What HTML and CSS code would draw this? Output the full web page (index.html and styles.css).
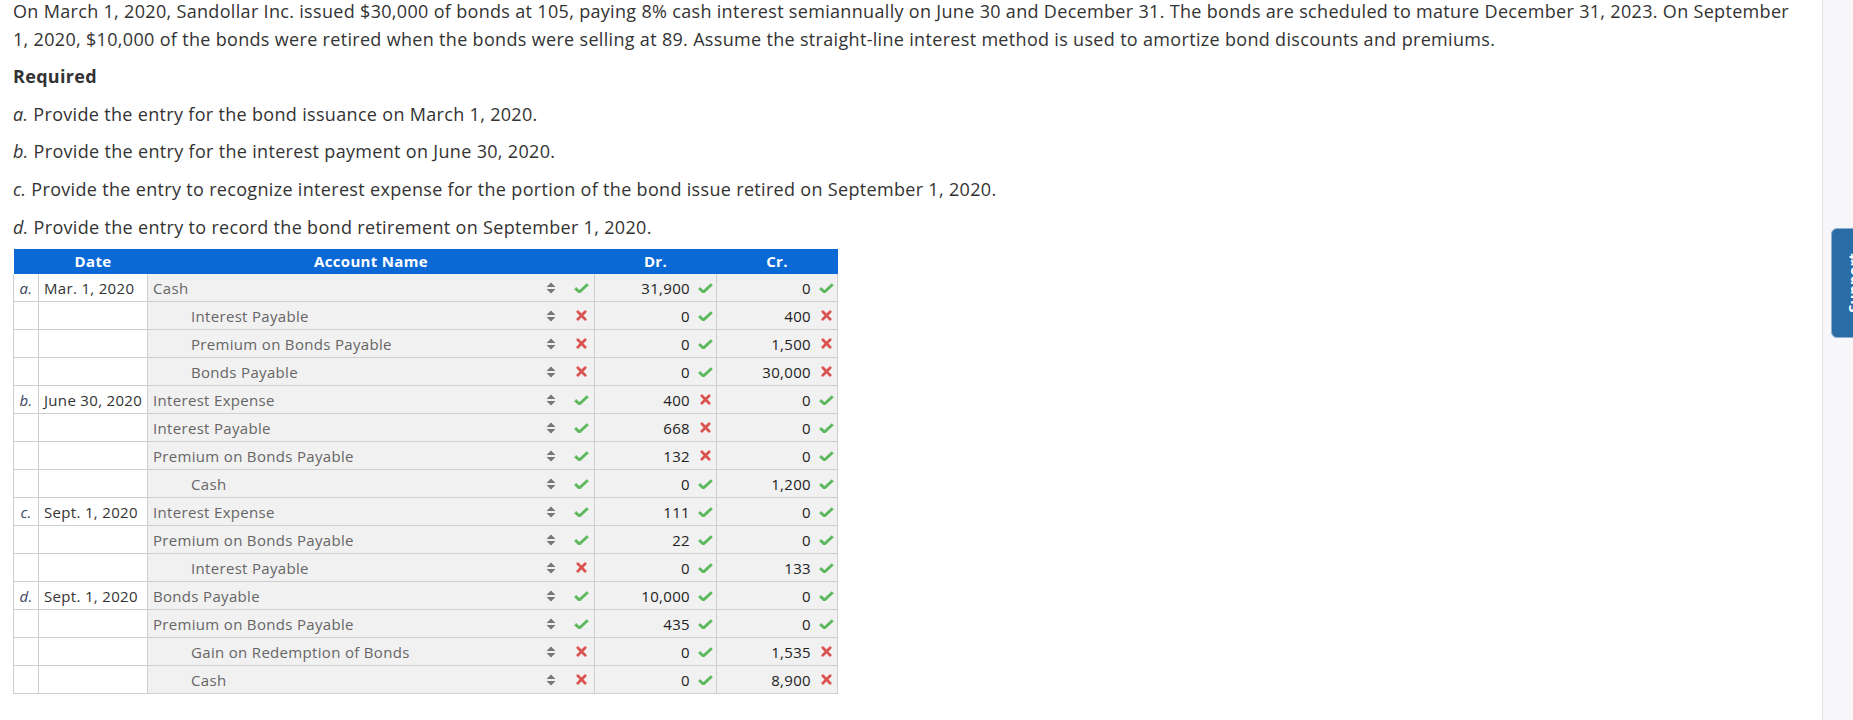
FILE: index.html
```html
<!DOCTYPE html>
<html lang="en">
<head>
<meta charset="utf-8">
<title>Bond entries</title>
<link rel="stylesheet" href="styles.css">
</head>
<body>
<svg width="0" height="0" class="defs" aria-hidden="true">
  <defs>
    <symbol id="ok" viewBox="0 0 15 10"><path d="M1.2 5.2 L5.4 9 L13.8 1.2" fill="none" stroke="#5cb85c" stroke-width="2.9" stroke-linejoin="miter"/></symbol>
    <symbol id="bad" viewBox="0 0 12 12"><path d="M2 2 L10 10 M10 2 L2 10" fill="none" stroke="#d9534f" stroke-width="3" stroke-linecap="round"/></symbol>
    <symbol id="sort" viewBox="0 0 10 12"><path d="M0.5 5 L5 0.5 L9.5 5 Z M0.5 7 L9.5 7 L5 11.5 Z" fill="#777"/></symbol>
  </defs>
</svg>
<div class="page">
  <main class="main">
    <p class="intro">On March 1, 2020, Sandollar Inc. issued $30,000 of bonds at 105, paying 8% cash interest semiannually on June 30 and December 31. The bonds are scheduled to mature December 31, 2023. On September 1, 2020, $10,000 of the bonds were retired when the bonds were selling at 89. Assume the straight-line interest method is used to amortize bond discounts and premiums.</p>
    <p class="req">Required</p>
    <p class="item"><i>a.</i> Provide the entry for the bond issuance on March 1, 2020.</p>
    <p class="item"><i>b.</i> Provide the entry for the interest payment on June 30, 2020.</p>
    <p class="item"><i>c.</i> Provide the entry to recognize interest expense for the portion of the bond issue retired on September 1, 2020.</p>
    <p class="item last"><i>d.</i> Provide the entry to record the bond retirement on September 1, 2020.</p>

    <table class="jt">
      <colgroup><col class="c-l"><col class="c-d"><col class="c-a"><col class="c-n"><col class="c-n2"></colgroup>
      <thead>
        <tr><th></th><th>Date</th><th>Account Name</th><th>Dr.</th><th>Cr.</th></tr>
      </thead>
      <tbody id="rows"></tbody>
    </table>
  </main>
  <aside class="side">
    <div class="support"><span>Support</span></div>
  </aside>
</div>
<script>
const data = [
  ["a.","Mar. 1, 2020","Cash",0,1,"31,900",1,"0",1],
  ["","","Interest Payable",1,0,"0",1,"400",0],
  ["","","Premium on Bonds Payable",1,0,"0",1,"1,500",0],
  ["","","Bonds Payable",1,0,"0",1,"30,000",0],
  ["b.","June 30, 2020","Interest Expense",0,1,"400",0,"0",1],
  ["","","Interest Payable",0,1,"668",0,"0",1],
  ["","","Premium on Bonds Payable",0,1,"132",0,"0",1],
  ["","","Cash",1,1,"0",1,"1,200",1],
  ["c.","Sept. 1, 2020","Interest Expense",0,1,"111",1,"0",1],
  ["","","Premium on Bonds Payable",0,1,"22",1,"0",1],
  ["","","Interest Payable",1,0,"0",1,"133",1],
  ["d.","Sept. 1, 2020","Bonds Payable",0,1,"10,000",1,"0",1],
  ["","","Premium on Bonds Payable",0,1,"435",1,"0",1],
  ["","","Gain on Redemption of Bonds",1,0,"0",1,"1,535",0],
  ["","","Cash",1,0,"0",1,"8,900",0]
];
const icon = ok => ok
  ? '<svg class="ic ic-ok" viewBox="0 0 15 10"><use href="#ok"/></svg>'
  : '<svg class="ic ic-bad" viewBox="0 0 12 12"><use href="#bad"/></svg>';
const tb = document.getElementById('rows');
tb.innerHTML = data.map(r => `
  <tr>
    <td class="let"><i>${r[0]}</i></td>
    <td class="date">${r[1]}</td>
    <td class="acct"><div class="acct-in"><span class="name${r[3] ? ' ind' : ''}">${r[2]}</span><svg class="sort" viewBox="0 0 10 12"><use href="#sort"/></svg><span class="stat">${icon(r[4])}</span></div></td>
    <td class="num"><div class="num-in"><span>${r[5]}</span><span class="nstat">${icon(r[6])}</span></div></td>
    <td class="num"><div class="num-in"><span>${r[7]}</span><span class="nstat">${icon(r[8])}</span></div></td>
  </tr>`).join('');
</script>
</body>
</html>
```

FILE: styles.css
```css
html, body {
  margin: 0;
  padding: 0;
  background: #fff;
}
body {
  font-family: "Open Sans", "DejaVu Sans", sans-serif;
  color: #333;
  overflow: hidden;
  letter-spacing: 0.02em;
}
.defs { position: absolute; }
.page {
  display: flex;
  height: 720px;
}
.main {
  flex: 1;
  padding: 0 13px;
  min-width: 0;
}
.main p {
  margin: 0 0 10px;
  font-size: 18px;
  line-height: 27.6px;
}
.main p.last { margin-bottom: 8px; }
.intro { margin-top: -2px !important; }
.req { font-weight: 700; }
.item i { font-style: italic; }

.jt {
  border-collapse: collapse;
  table-layout: fixed;
  width: 824px;
  font-size: 15px;
}
.c-l { width: 25px; }
.c-d { width: 109px; }
.c-a { width: 447px; }
.c-n { width: 122px; }
.c-n2 { width: 121px; }
.jt thead th {
  background: #0b69d6;
  color: #fff;
  font-weight: 700;
  height: 25px;
  padding: 0;
  text-align: center;
  line-height: 25px;
}
.jt td {
  border: 1px solid #cfcfcf;
  height: 27px;
  padding: 0;
  line-height: 20px;
  white-space: nowrap;
}
.jt tbody tr:first-child td { border-top: none; }
.let {
  text-align: center;
  color: #3b4760;
}
.date {
  padding-left: 5px !important;
  color: #333;
}
.acct, .num { background: #f1f1f1; }
.acct-in {
  display: flex;
  align-items: center;
  padding: 0 5px 0 5px;
}
.name {
  flex: 1;
  color: #666;
}
.name.ind { padding-left: 38px; }
.sort {
  width: 10px;
  height: 12px;
  margin-right: 17px;
}
.stat {
  width: 16px;
  display: flex;
  justify-content: center;
  align-items: center;
}
.ic-ok { width: 15px; height: 10px; display: block; }
.ic-bad { width: 11px; height: 11px; display: block; }
.num-in {
  display: flex;
  align-items: center;
  justify-content: flex-end;
  padding-right: 3px;
  color: #222;
}
.nstat {
  width: 15px;
  margin-left: 8px;
  display: flex;
  justify-content: center;
  align-items: center;
}
.side {
  width: 30px;
  flex: none;
  border-left: 1px solid #e2e2e4;
  background: #f7f7f9;
  position: relative;
}
.support {
  position: absolute;
  top: 228px;
  left: 8px;
  width: 44px;
  height: 110px;
  background: #2a6ca6;
  border: 1px solid #8eb0cf;
  border-radius: 6px;
  box-sizing: border-box;
  display: flex;
  align-items: center;
  justify-content: center;
  overflow: hidden;
}
.support span {
  transform: rotate(-90deg);
  color: #fff;
  font-weight: 700;
  font-size: 15px;
  letter-spacing: 0;
  white-space: nowrap;
}
```
